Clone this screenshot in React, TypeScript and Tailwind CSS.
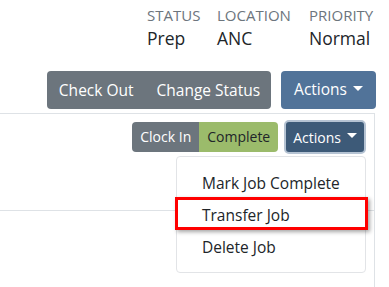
import React from 'react';

const font = { fontFamily: '"Open Sans", "Noto Sans", sans-serif' };

function Caret() {
  return (
    <span className="ml-[6px] inline-block h-0 w-0 translate-y-[-2px] border-x-[5px] border-t-[5px] border-x-transparent border-t-white align-middle" />
  );
}

function Meta({ label, value, width }: { label: string; value: string; width: string }) {
  return (
    <div className={`flex flex-col ${width}`}>
      <span className="text-[15px] leading-[20px] uppercase text-[#6c757d]">{label}</span>
      <span className="mt-[2px] text-[17.5px] leading-[22px] text-[#212529]">{value}</span>
    </div>
  );
}

export default function App() {
  return (
    <div style={font} className="relative h-[287px] w-[389px] overflow-hidden bg-white">
      {/* job meta */}
      <div className="flex justify-end pr-[14px] pt-[5px]">
        <Meta label="Status" value="Prep" width="w-[70px]" />
        <Meta label="Location" value="ANC" width="w-[92px]" />
        <Meta label="Priority" value="Normal" width="w-[66px]" />
      </div>

      {/* main actions */}
      <div className="mt-[22px] flex justify-end pr-[13px]">
        <div className="flex overflow-hidden rounded-[4px] bg-[#6c757d] text-[15.5px] leading-[38px] text-white">
          <button className="h-[38px] px-[12px]">Check Out</button>
          <button className="h-[38px] px-[11px]">Change Status</button>
        </div>
        <button className="ml-[10px] flex h-[38px] items-center rounded-[4px] bg-[#517399] px-[13px] text-[15.5px] text-white">
          Actions
          <Caret />
        </button>
      </div>

      {/* card */}
      <div className="ml-[-2px] mt-[4px] mr-[14px] h-[200px] border-t border-r border-[#dee2e6]">
        <div className="h-[97px] border-b border-[#dee2e6] pr-[8px] pt-[6px]">
          <div className="flex justify-end">
            <div className="mt-[2px] flex h-[30px] overflow-hidden rounded-[4px] text-[14px] leading-[30px]">
              <button className="bg-[#6c757d] px-[8px] text-white">Clock In</button>
              <button className="bg-[#9bbb6b] px-[8px] text-[#212529]">Complete</button>
            </div>
            <button className="ml-[6px] flex h-[34px] items-center rounded-[5px] border-[2px] border-[#b5c3d3] bg-[#3d5a78] px-[7px] text-[14px] text-white">
              Actions
              <Caret />
            </button>
          </div>
        </div>
      </div>

      {/* dropdown */}
      <div className="absolute left-[176px] top-[156px] w-[190px] rounded-[4px] border border-[#e2e4e7] bg-white pb-[9px] pt-[10px] text-[15.5px] text-[#212529]">
        <div className="px-[25px] leading-[32px]">Mark Job Complete</div>
        <div className="px-[25px] leading-[32px]">Transfer Job</div>
        <div className="px-[25px] leading-[32px]">Delete Job</div>
      </div>

      {/* highlight */}
      <div className="absolute left-[175px] top-[197px] h-[33px] w-[193px] border-[3px] border-[#ff0000] shadow-[2px_2px_4px_rgba(0,0,0,0.35)]" />
    </div>
  );
}
